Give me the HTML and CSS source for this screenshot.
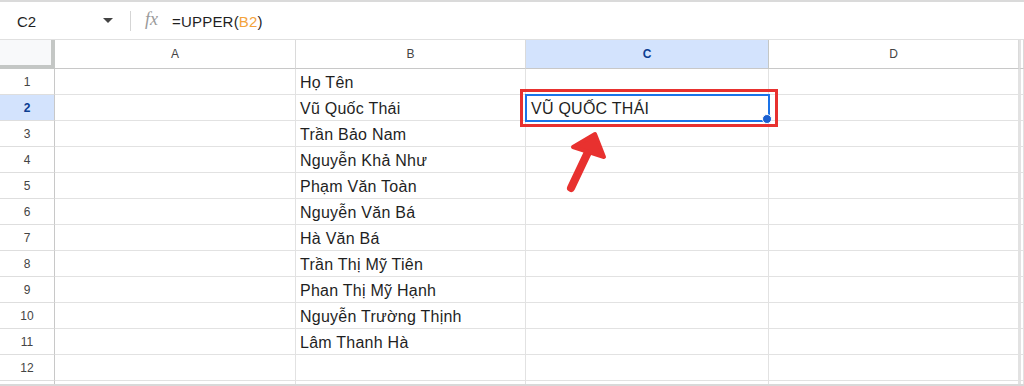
FILE: index.html
```html
<!DOCTYPE html>
<html>
<head>
<meta charset="utf-8">
<link rel="stylesheet" href="styles.css">
</head>
<body>
<div class="topline"></div>
<div class="fbar">
  <div class="namebox">C2</div>
  <svg class="caret" width="10" height="6" viewBox="0 0 10 6"><path d="M0 0H10L5 5Z" fill="#444"/></svg>
  <div class="sep"></div>
  <div class="fx">fx</div>
  <div class="formula">=UPPER(<span class="ref">B2</span>)</div>
</div>
<div class="sheet">
  <div class="grid">
    <div class="corner"></div>
    <div class="ch">A</div>
    <div class="ch">B</div>
    <div class="ch sel">C</div>
    <div class="ch">D</div>
    <div class="ch edge"></div>

    <div class="rh">1</div><div class="c"></div><div class="c">Họ Tên</div><div class="c"></div><div class="c"></div><div class="c edge"></div>
    <div class="rh sel">2</div><div class="c"></div><div class="c">Vũ Quốc Thái</div><div class="c active">VŨ QUỐC THÁI<span class="dot"></span></div><div class="c"></div><div class="c edge"></div>
    <div class="rh">3</div><div class="c"></div><div class="c">Trần Bảo Nam</div><div class="c"></div><div class="c"></div><div class="c edge"></div>
    <div class="rh">4</div><div class="c"></div><div class="c">Nguyễn Khả Như</div><div class="c"></div><div class="c"></div><div class="c edge"></div>
    <div class="rh">5</div><div class="c"></div><div class="c">Phạm Văn Toàn</div><div class="c"></div><div class="c"></div><div class="c edge"></div>
    <div class="rh">6</div><div class="c"></div><div class="c">Nguyễn Văn Bá</div><div class="c"></div><div class="c"></div><div class="c edge"></div>
    <div class="rh">7</div><div class="c"></div><div class="c">Hà Văn Bá</div><div class="c"></div><div class="c"></div><div class="c edge"></div>
    <div class="rh">8</div><div class="c"></div><div class="c">Trần Thị Mỹ Tiên</div><div class="c"></div><div class="c"></div><div class="c edge"></div>
    <div class="rh">9</div><div class="c"></div><div class="c">Phan Thị Mỹ Hạnh</div><div class="c"></div><div class="c"></div><div class="c edge"></div>
    <div class="rh">10</div><div class="c"></div><div class="c">Nguyễn Trường Thịnh</div><div class="c"></div><div class="c"></div><div class="c edge"></div>
    <div class="rh">11</div><div class="c"></div><div class="c">Lâm Thanh Hà</div><div class="c"></div><div class="c"></div><div class="c edge"></div>
    <div class="rh">12</div><div class="c"></div><div class="c"></div><div class="c"></div><div class="c"></div><div class="c edge"></div>
    <div class="rh tail"></div><div class="c tail"></div><div class="c tail"></div><div class="c tail"></div><div class="c tail"></div><div class="c edge tail"></div>
  </div>
  <div class="redbox"></div>
  <svg class="arrow" width="60" height="80" viewBox="0 0 60 80">
    <path d="M13 68 L31 30" stroke="#e8312f" stroke-width="8" stroke-linecap="round" fill="none"/>
    <path d="M15 27 L37 14 L46 37 Z" fill="#e8312f" stroke="#e8312f" stroke-width="4" stroke-linejoin="round"/>
  </svg>
</div>
<div class="bottombar"></div>
</body>
</html>
```
FILE: styles.css
```css
* { box-sizing: border-box; }
html, body { margin: 0; padding: 0; background: #fff; }
body {
  width: 1024px;
  height: 386px;
  overflow: hidden;
  font-family: "Liberation Sans", Arial, sans-serif;
  color: #1f1f1f;
}
.topline { height: 2px; background: #dadada; }
.fbar {
  height: 38px;
  display: flex;
  align-items: center;
  border-bottom: 1px solid #e0e0e0;
}
.namebox {
  width: 103px;
  padding-left: 17px;
  padding-top: 1px;
  font-size: 15px;
  color: #1f1f1f;
}
.caret { margin-top: 1px; }
.sep {
  width: 1px;
  height: 20px;
  background: #d5d5d5;
  margin-left: 17px;
  margin-right: 14px;
}
.fx {
  font-family: "Liberation Serif", "Times New Roman", serif;
  font-style: italic;
  font-size: 18px;
  color: #9a9a9a;
  width: 27px;
  margin-top: -2px;
}
.formula {
  font-size: 15px;
  color: #1f1f1f;
  letter-spacing: 0.2px;
  padding-top: 1px;
}
.ref { color: #f3a33c; }
.sheet { position: relative; }
.grid {
  display: grid;
  grid-template-columns: 55px 241px 230px 243px 250px 5px;
  grid-template-rows: 29px repeat(12, 26px) 3px;
}
.corner {
  background: #f8f9fa;
  border-right: 4px solid #c4c7c5;
  border-bottom: 4px solid #c4c7c5;
}
.ch {
  border-right: 1px solid #dadada;
  border-bottom: 1px solid #c8c8c8;
  font-size: 12px;
  color: #444;
  display: flex;
  align-items: center;
  justify-content: center;
}
.ch.sel {
  background: #d3e3fd;
  color: #0b3d91;
  font-weight: bold;
  border-right-color: #c4c7c5;
}
.rh {
  border-right: 1px solid #c8c8c8;
  border-bottom: 1px solid #dedede;
  font-size: 12px;
  color: #444;
  display: flex;
  align-items: center;
  justify-content: center;
  padding-top: 1px;
}
.rh.sel {
  background: #d3e3fd;
  color: #0b3d91;
  font-weight: bold;
}
.c {
  border-right: 1px solid #e2e2e2;
  border-bottom: 1px solid #e2e2e2;
  font-size: 16px;
  letter-spacing: 0.25px;
  padding-left: 4px;
  padding-top: 2px;
  display: flex;
  align-items: center;
  white-space: nowrap;
}
.edge { border-left: 2px solid #e2e2e2; padding-left: 0; }
.tail { border-bottom: none; }
.c.active {
  position: relative;
  outline: 2px solid #1a73e8;
  outline-offset: -1px;
  padding-left: 5px;
}
.dot {
  position: absolute;
  right: -4px;
  bottom: -4px;
  width: 10px;
  height: 10px;
  border-radius: 50%;
  background: #1a5fd0;
  border: 1px solid #fff;
}
.redbox {
  position: absolute;
  left: 520px;
  top: 49px;
  width: 258px;
  height: 38px;
  border: 3px solid #e8312f;
  pointer-events: none;
}
.arrow {
  position: absolute;
  left: 558px;
  top: 80px;
}
.bottombar { height: 4px; background: #d9d9d9; }
```
